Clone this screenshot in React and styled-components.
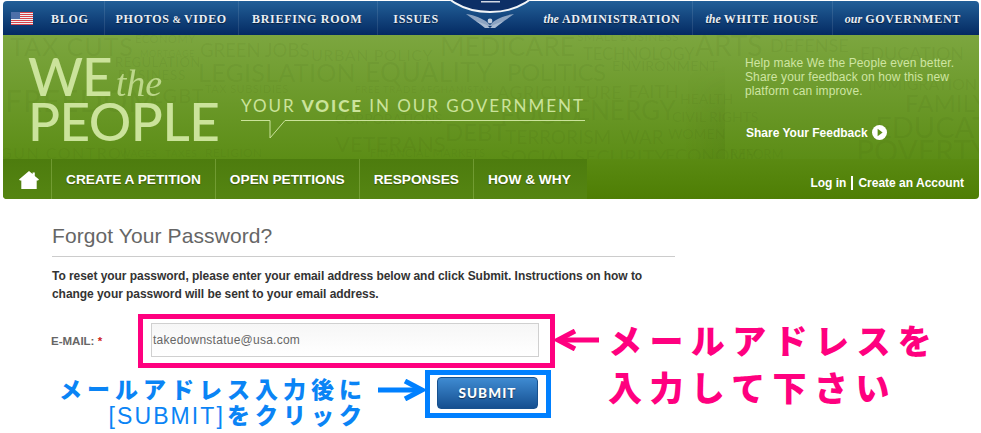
import React from "react";
import styled, { createGlobalStyle } from "styled-components";

const Global = createGlobalStyle`
  html, body { margin: 0; padding: 0; background: #fff; }
  body { font-family: "Liberation Sans", Arial, sans-serif; }
  * { box-sizing: border-box; }
`;

const Page = styled.div`
  width: 981px;
  height: 433px;
  overflow: hidden;
  background: #fff;
  position: relative;
`;

const Masthead = styled.header`
  margin: 1px 2px 0 3px;
  border-radius: 4px;
  overflow: hidden;
`;

const TopBar = styled.div`
  height: 34px;
  display: flex;
  justify-content: space-between;
  background: linear-gradient(#225f98, #042a62);
`;

const TopGroup = styled.nav`
  display: flex;
  align-items: center;
`;

const FlagWrap = styled.span`
  display: flex;
  width: 48px;
  padding-left: 8px;
`;

const TopLink = styled.a`
  display: block;
  height: 100%;
  padding: 0 ${(p) => p.$right}px 0 ${(p) => p.$left}px;
  border-right: ${(p) => (p.$last ? "none" : "1px solid rgba(255,255,255,.1)")};
  font-family: "Liberation Serif", serif;
  font-weight: bold;
  font-size: 12px;
  line-height: 37px;
  letter-spacing: 0.72px;
  color: #e9eef4;
  white-space: nowrap;
  text-shadow: 0 1px 1px rgba(0,0,0,.5);
  i {
    font-size: 12px;
    letter-spacing: 0;
    margin-right: 3px;
  }
  small {
    font-size: 10px;
    margin: 0 -1px;
  }
`;

const SealWrap = styled.div`
  position: absolute;
  left: 440px;
  top: 0;
  width: 100px;
  height: 32px;
`;

const Hero = styled.div`
  position: relative;
  height: 124px;
  display: flex;
  overflow: hidden;
  background: linear-gradient(#7ca63f, #5c8d16);
`;

const Cloud = styled.div`
  position: absolute;
  inset: 0;
`;

const Word = styled.span`
  position: absolute;
  left: ${(p) => p.$x - 3}px;
  top: ${(p) => p.$y - 35}px;
  font-family: Lato, sans-serif;
  font-weight: 400;
  font-size: ${(p) => p.$s}px;
  line-height: 1;
  letter-spacing: ${(p) => p.$ls || 0}px;
  color: rgba(48, 78, 8, 0.075);
  white-space: nowrap;
`;

const Brand = styled.div`
  position: relative;
  width: 238px;
  padding: 14px 0 0 25px;
  color: #cbe39b;
  font-family: Lato, sans-serif;
  font-weight: 500;
  line-height: 1;
`;

const BrandTop = styled.div`
  display: flex;
  align-items: baseline;
  height: 45px;
  font-size: 53px;
  letter-spacing: -1px;
`;

const BrandThe = styled.span`
  font-family: "Liberation Serif", serif;
  font-style: italic;
  font-weight: normal;
  font-size: 38px;
  letter-spacing: 0;
  margin-left: 4px;
  opacity: 0.85;
`;

const BrandBottom = styled.div`
  font-size: 53px;
  letter-spacing: -0.5px;
`;

const Tagline = styled.div`
  position: relative;
  padding-top: 60px;
  width: 344px;
  color: #cbe39b;
`;

const TagText = styled.div`
  font-family: Lato, sans-serif;
  font-size: 17px;
  line-height: 22px;
  letter-spacing: 1.95px;
  white-space: nowrap;
  b { font-weight: 900; }
`;

const Feedback = styled.aside`
  position: relative;
  margin-left: auto;
  width: 254px;
  padding: 21px 10px 0 20px;
  &::before {
    content: "";
    position: absolute;
    left: -40px;
    top: 0;
    bottom: 0;
    width: 40px;
    background: linear-gradient(to right, rgba(40,70,0,0), rgba(40,70,0,.08));
    -webkit-mask-image: linear-gradient(transparent 25%, #000 70%);
    mask-image: linear-gradient(transparent 25%, #000 70%);
  }
`;

const FeedbackText = styled.p`
  margin: 0;
  font-size: 12px;
  line-height: 14px;
  letter-spacing: 0.11px;
  color: #cfe5a2;
`;

const FeedbackLink = styled.a`
  display: flex;
  align-items: center;
  gap: 4px;
  margin-top: 27px;
  padding-left: 1px;
  font-size: 12px;
  font-weight: bold;
  color: #fff;
`;

const NavBar = styled.div`
  height: 40px;
  display: flex;
  justify-content: space-between;
  background: linear-gradient(#5a8a12, #4e7e04);
`;

const Tabs = styled.nav`
  display: flex;
  padding-right: 2px;
  background: linear-gradient(#4d7c0e, #558512);
`;

const Tab = styled.a`
  display: flex;
  align-items: center;
  justify-content: center;
  padding: ${(p) => (p.$home ? "2px 0 0 3px" : "0 14px 0 14px")};
  width: ${(p) => (p.$home ? "49px" : "auto")};
  border-right: ${(p) => (p.$last ? "none" : "1px solid rgba(190,220,130,.3)")};
  font-size: 13.7px;
  font-weight: bold;
  color: #fff;
  white-space: nowrap;
  text-shadow: 0 1px 1px rgba(40,60,0,.6);
`;

const Account = styled.div`
  display: flex;
  align-items: center;
  padding: 7px 15px 0 0;
  font-size: 12px;
  font-weight: bold;
  color: #fff;
`;

const AccountLink = styled.a`
  line-height: 14px;
  & + & {
    margin-left: 5px;
    padding-left: 5px;
    border-left: 2px solid #fff;
  }
`;

const Main = styled.main`
  padding: 26px 0 0 52px;
`;

const Heading = styled.h1`
  width: 623px;
  margin: 0;
  padding-bottom: 10px;
  border-bottom: 1px solid #ccc;
  font-size: 21px;
  line-height: 21px;
  font-weight: normal;
  letter-spacing: 0.1px;
  color: #666;
`;

const Intro = styled.p`
  width: 623px;
  margin: 10px 0 0;
  font-size: 12px;
  line-height: 18px;
  font-weight: bold;
  letter-spacing: -0.05px;
  color: #333;
`;

const FormArea = styled.div`
  display: flex;
  margin-top: 11px;
`;

const FormLeft = styled.div`
  width: 503px;
`;

const FieldRow = styled.div`
  display: flex;
  align-items: center;
`;

const FieldLabel = styled.label`
  width: 87px;
  margin-left: -1px;
  font-size: 11.5px;
  font-weight: bold;
  color: #666;
  span { color: #c22; }
`;

const PinkFrame = styled.div`
  width: 417px;
  height: 54px;
  padding: 4px 11px 4px 8px;
  border: 5px solid #ff007f;
`;

const EmailInput = styled.div`
  height: 34px;
  padding-left: 1px;
  border: 1px solid #d0d0d0;
  background: linear-gradient(#f6f6f6, #fff);
  font-size: 12px;
  line-height: 32px;
  letter-spacing: 0.25px;
  color: #666;
`;

const SubmitRow = styled.div`
  display: flex;
  align-items: flex-start;
  margin-top: 2px;
`;

const BlueNote = styled.div`
  width: 315px;
  padding-top: 5px;
  text-align: right;
  font-family: "Noto Sans CJK JP", sans-serif;
  font-weight: 900;
  font-size: 23px;
  line-height: 26px;
  letter-spacing: 5px;
  color: #0a84f5;
  white-space: nowrap;
  span {
    font-family: "Liberation Sans", sans-serif;
    font-weight: normal;
    letter-spacing: 2.1px;
    margin-right: 2px;
  }
`;

const BlueArrow = styled.div`
  width: 58px;
  padding: 9px 0 0 11px;
`;

const BlueFrame = styled.div`
  width: 126px;
  height: 48px;
  padding: 2px 0 0 7px;
  border: 5px solid #0080ff;
`;

const SubmitButton = styled.button`
  width: 101px;
  height: 32px;
  padding: 0;
  border: 1px solid #17518f;
  border-radius: 4px;
  background: linear-gradient(#3f8bd2, #154f90);
  font-family: Lato, sans-serif;
  font-weight: 900;
  font-size: 13.5px;
  letter-spacing: 1.1px;
  color: #fff;
  text-shadow: 0 1px 1px rgba(0,0,0,.5);
`;

const PinkNote = styled.div`
  display: flex;
  align-items: flex-start;
`;

const PinkArrow = styled.div`
  width: 53px;
  padding-top: 15px;
`;

const PinkText = styled.div`
  margin-top: 2px;
  font-family: "Noto Sans CJK JP", sans-serif;
  font-weight: 900;
  font-size: 34px;
  line-height: 47px;
  letter-spacing: 7.4px;
  color: #ff007f;
  white-space: nowrap;
`;

const words = [
  ["TAX CUTS", 10, 34, 25, 1],
  ["ECONOMY", 135, 33, 11, 0.6],
  ["MORTGAGE", 140, 49, 9, 0.6],
  ["GREEN JOBS", 200, 41, 18.5],
  ["URBAN POLICY", 311, 47, 16, 0.6],
  ["MEDICARE", 440, 33, 26.5, 0],
  ["SMALL BUSINESS", 577, 31, 12, 0.4],
  ["TECHNOLOGY", 583, 46, 16.5, 0],
  ["ARTS", 695, 31, 28, 0],
  ["DEFENSE", 770, 36, 18, 0],
  ["EDUCATION", 860, 44, 18, 0],
  ["REGULATION", 115, 56, 13, 0.5],
  ["BUSINESS", 118, 69, 13, 1],
  ["LEGISLATION", 198, 60, 25, 0.3],
  ["EQUALITY", 365, 59, 26, 0.5],
  ["POLITICS", 507, 60, 24, -0.5],
  ["ENVIRONMENT", 612, 59, 14, 0.3],
  ["IMMIGRATION", 868, 76, 16, 0],
  ["FREEDOM", 5, 85, 30, 1],
  ["LGBT", 152, 85, 20, 1],
  ["TAX SUBSIDIES", 205, 83, 11, 0.5],
  ["FREE TRADE AFGHANISTAN", 355, 84, 10, 0.4],
  ["AGRICULTURE", 497, 83, 18, 0.5],
  ["FAITH", 628, 82, 18, 0],
  ["FOOD", 500, 100, 27, 0],
  ["ENERGY", 575, 97, 26, 0],
  ["HEALTH", 680, 92, 14, 0],
  ["CIVIL RIGHTS", 672, 110, 14, 0],
  ["CORPORATIONS", 335, 112, 14, 0],
  ["DEBT", 445, 120, 24, 0],
  ["TERRORISM", 505, 127, 19, 0],
  ["WAR", 620, 127, 19, 0],
  ["WOMEN", 668, 127, 14, 0],
  ["VETERANS", 335, 133, 22, 0],
  ["SOCIAL SECURITY", 500, 146, 20, 0],
  ["ECONOMY", 665, 146, 18, 0],
  ["REFORM", 730, 148, 13, 0],
  ["POVERTY", 856, 135, 30, 0],
  ["FAMILY", 905, 91, 24, 0],
  ["EDUCATION", 875, 112, 29, 0],
  ["GUN CONTROL", 0, 145, 16, 1.5],
  ["WAGES", 120, 148, 10, 0.5],
  ["TAXES", 165, 148, 10, 0.5],
  ["RELIGION", 205, 147, 12, 0.3],
  ["FINANCIAL MARKETS", 370, 147, 11, 0.3],
];

function Flag() {
  const stripes = [0, 2, 4, 6, 8, 10, 12];
  return (
    <svg width="22" height="13" viewBox="0 0 22 13">
      <rect width="22" height="13" fill="#eef0f3" />
      {stripes.map((y) => (
        <rect key={y} y={y} width="22" height="1" fill="#d8434b" />
      ))}
      <rect width="9" height="7" fill="#4d6fa8" />
    </svg>
  );
}

function Seal() {
  return (
    <svg width="100" height="32" viewBox="0 0 100 32">
      <ellipse cx="50" cy="-18" rx="49" ry="30" fill="#0c2f66" stroke="#f2f5f8" strokeWidth="2" />
      <rect x="41" y="1" width="19" height="1.5" fill="#cfd6e2" />
      <path d="M26 14c9 1 17 5 21 8l3 3 3-3c4-3 12-7 21-8-6 4-10 8-15 10l-6 2h-6l-6-2C36 22 32 18 26 14z" fill="#8da4c2" />
      <path d="M36 21l11 4 3 3 3-3 11-4-9 7h-10z" fill="#a9bbd2" />
      <circle cx="50" cy="21" r="2.4" fill="#c5d1e0" />
    </svg>
  );
}

function SpeechLine() {
  return (
    <svg width="344" height="22" viewBox="0 0 344 22" style={{ display: "block", marginTop: 2 }}>
      <path d="M0 1.5h21l8 0V19L44 1.5h300" fill="none" stroke="#cbe39b" strokeWidth="1" />
    </svg>
  );
}

function PlayIcon() {
  return (
    <svg width="15" height="15" viewBox="0 0 15 15">
      <circle cx="7.5" cy="7.5" r="7.5" fill="#fff" />
      <path d="M5.6 3.8l5 3.7-5 3.7z" fill="#5c8d16" />
    </svg>
  );
}

function HomeIcon() {
  return (
    <svg width="20" height="18" viewBox="0 0 20 18">
      <path d="M10 0l3.6 3V1.4h2.2v3.5L20 8.6l-1 .9h-1.3V18H2.3V9.5H1l-1-.9z" fill="#fff" />
    </svg>
  );
}

function Arrow({ color, width, flip }) {
  return (
    <svg width={width} height="22" viewBox={`0 0 ${width} 22`} style={{ display: "block", transform: flip ? "scaleX(-1)" : "none" }}>
      <path d={`M0 11H${width - 6}`} stroke={color} strokeWidth="5" />
      <path d={`M${width - 20} 2L${width - 3} 11L${width - 20} 20`} fill="none" stroke={color} strokeWidth="5" />
    </svg>
  );
}

export default function App() {
  return (
    <Page>
      <Global />
      <Masthead>
        <TopBar>
          <TopGroup>
            <FlagWrap><Flag /></FlagWrap>
            <TopLink $left={0} $right={15}>BLOG</TopLink>
            <TopLink $left={11} $right={11}>PHOTOS <small>&amp;</small> VIDEO</TopLink>
            <TopLink $left={13} $right={15}>BRIEFING ROOM</TopLink>
            <TopLink $left={15} $right={0} $last>ISSUES</TopLink>
          </TopGroup>
          <TopGroup>
            <TopLink $left={0} $right={12}><i>the</i>ADMINISTRATION</TopLink>
            <TopLink $left={12} $right={13}><i>the</i>WHITE HOUSE</TopLink>
            <TopLink $left={12} $right={18} $last><i>our</i>GOVERNMENT</TopLink>
          </TopGroup>
        </TopBar>
        <Hero>
          <Cloud>
            {words.map(([text, x, y, s, ls]) => (
              <Word key={text + x} $x={x} $y={y} $s={s} $ls={ls}>{text}</Word>
            ))}
          </Cloud>
          <Brand>
            <BrandTop>WE<BrandThe>the</BrandThe></BrandTop>
            <BrandBottom>PEOPLE</BrandBottom>
          </Brand>
          <Tagline>
            <TagText>YOUR <b>VOICE</b> IN OUR GOVERNMENT</TagText>
            <SpeechLine />
          </Tagline>
          <Feedback>
            <FeedbackText>
              Help make We the People even better.<br />
              Share your feedback on how this new<br />
              platform can improve.
            </FeedbackText>
            <FeedbackLink>Share Your Feedback <PlayIcon /></FeedbackLink>
          </Feedback>
        </Hero>
        <NavBar>
          <Tabs>
            <Tab $home><HomeIcon /></Tab>
            <Tab>CREATE A PETITION</Tab>
            <Tab>OPEN PETITIONS</Tab>
            <Tab>RESPONSES</Tab>
            <Tab $last>HOW &amp; WHY</Tab>
          </Tabs>
          <Account>
            <AccountLink>Log in</AccountLink>
            <AccountLink>Create an Account</AccountLink>
          </Account>
        </NavBar>
      </Masthead>
      <SealWrap><Seal /></SealWrap>
      <Main>
        <Heading>Forgot Your Password?</Heading>
        <Intro>
          To reset your password, please enter your email address below and click Submit. Instructions on how to<br />
          change your password will be sent to your email address.
        </Intro>
        <FormArea>
          <FormLeft>
            <FieldRow>
              <FieldLabel>E-MAIL: <span>*</span></FieldLabel>
              <PinkFrame>
                <EmailInput>takedownstatue@usa.com</EmailInput>
              </PinkFrame>
            </FieldRow>
            <SubmitRow>
              <BlueNote>
                メールアドレス入力後に<br />
                <span>[SUBMIT]</span>をクリック
              </BlueNote>
              <BlueArrow><Arrow color="#0080ff" width="47" /></BlueArrow>
              <BlueFrame>
                <SubmitButton>SUBMIT</SubmitButton>
              </BlueFrame>
            </SubmitRow>
          </FormLeft>
          <PinkNote>
            <PinkArrow><Arrow color="#ff007f" width="44" flip /></PinkArrow>
            <PinkText>
              メールアドレスを<br />
              入力して下さい
            </PinkText>
          </PinkNote>
        </FormArea>
      </Main>
    </Page>
  );
}
